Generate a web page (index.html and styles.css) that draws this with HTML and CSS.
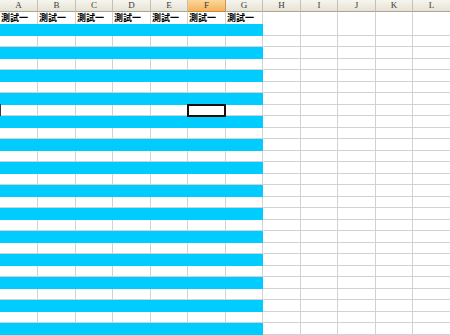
FILE: index.html
```html
<!DOCTYPE html>
<html>
<head>
<meta charset="utf-8">
<link rel="stylesheet" href="styles.css">
</head>
<body>
<div class="sheet">
  <div class="row hdr">
    <div class="hc">A</div><div class="hc">B</div><div class="hc">C</div><div class="hc">D</div><div class="hc">E</div><div class="hc sel">F</div><div class="hc">G</div><div class="hc">H</div><div class="hc">I</div><div class="hc">J</div><div class="hc">K</div><div class="hc">L</div>
  </div>
  <div class="row first">
    <div class="cell t">測試一</div><div class="cell t">測試一</div><div class="cell t">測試一</div><div class="cell t">測試一</div><div class="cell t">測試一</div><div class="cell t">測試一</div><div class="cell t">測試一</div><div class="cell"></div><div class="cell"></div><div class="cell"></div><div class="cell"></div><div class="cell"></div>
  </div>
  <div class="row c"><div class="fill"></div><div class="cell"></div><div class="cell"></div><div class="cell"></div><div class="cell"></div><div class="cell"></div></div>
  <div class="row w"><div class="cell"></div><div class="cell"></div><div class="cell"></div><div class="cell"></div><div class="cell"></div><div class="cell"></div><div class="cell"></div><div class="cell"></div><div class="cell"></div><div class="cell"></div><div class="cell"></div><div class="cell"></div></div>
  <div class="row c"><div class="fill"></div><div class="cell"></div><div class="cell"></div><div class="cell"></div><div class="cell"></div><div class="cell"></div></div>
  <div class="row w"><div class="cell"></div><div class="cell"></div><div class="cell"></div><div class="cell"></div><div class="cell"></div><div class="cell"></div><div class="cell"></div><div class="cell"></div><div class="cell"></div><div class="cell"></div><div class="cell"></div><div class="cell"></div></div>
  <div class="row c"><div class="fill"></div><div class="cell"></div><div class="cell"></div><div class="cell"></div><div class="cell"></div><div class="cell"></div></div>
  <div class="row w"><div class="cell"></div><div class="cell"></div><div class="cell"></div><div class="cell"></div><div class="cell"></div><div class="cell"></div><div class="cell"></div><div class="cell"></div><div class="cell"></div><div class="cell"></div><div class="cell"></div><div class="cell"></div></div>
  <div class="row c"><div class="fill"></div><div class="cell"></div><div class="cell"></div><div class="cell"></div><div class="cell"></div><div class="cell"></div></div>
  <div class="row w"><div class="cell active-row"><span class="rowmark"></span></div><div class="cell"></div><div class="cell"></div><div class="cell"></div><div class="cell"></div><div class="cell active"><span class="cursor"></span></div><div class="cell"></div><div class="cell"></div><div class="cell"></div><div class="cell"></div><div class="cell"></div><div class="cell"></div></div>
  <div class="row c"><div class="fill"></div><div class="cell"></div><div class="cell"></div><div class="cell"></div><div class="cell"></div><div class="cell"></div></div>
  <div class="row w"><div class="cell"></div><div class="cell"></div><div class="cell"></div><div class="cell"></div><div class="cell"></div><div class="cell"></div><div class="cell"></div><div class="cell"></div><div class="cell"></div><div class="cell"></div><div class="cell"></div><div class="cell"></div></div>
  <div class="row c"><div class="fill"></div><div class="cell"></div><div class="cell"></div><div class="cell"></div><div class="cell"></div><div class="cell"></div></div>
  <div class="row w"><div class="cell"></div><div class="cell"></div><div class="cell"></div><div class="cell"></div><div class="cell"></div><div class="cell"></div><div class="cell"></div><div class="cell"></div><div class="cell"></div><div class="cell"></div><div class="cell"></div><div class="cell"></div></div>
  <div class="row c"><div class="fill"></div><div class="cell"></div><div class="cell"></div><div class="cell"></div><div class="cell"></div><div class="cell"></div></div>
  <div class="row w"><div class="cell"></div><div class="cell"></div><div class="cell"></div><div class="cell"></div><div class="cell"></div><div class="cell"></div><div class="cell"></div><div class="cell"></div><div class="cell"></div><div class="cell"></div><div class="cell"></div><div class="cell"></div></div>
  <div class="row c"><div class="fill"></div><div class="cell"></div><div class="cell"></div><div class="cell"></div><div class="cell"></div><div class="cell"></div></div>
  <div class="row w"><div class="cell"></div><div class="cell"></div><div class="cell"></div><div class="cell"></div><div class="cell"></div><div class="cell"></div><div class="cell"></div><div class="cell"></div><div class="cell"></div><div class="cell"></div><div class="cell"></div><div class="cell"></div></div>
  <div class="row c"><div class="fill"></div><div class="cell"></div><div class="cell"></div><div class="cell"></div><div class="cell"></div><div class="cell"></div></div>
  <div class="row w"><div class="cell"></div><div class="cell"></div><div class="cell"></div><div class="cell"></div><div class="cell"></div><div class="cell"></div><div class="cell"></div><div class="cell"></div><div class="cell"></div><div class="cell"></div><div class="cell"></div><div class="cell"></div></div>
  <div class="row c"><div class="fill"></div><div class="cell"></div><div class="cell"></div><div class="cell"></div><div class="cell"></div><div class="cell"></div></div>
  <div class="row w"><div class="cell"></div><div class="cell"></div><div class="cell"></div><div class="cell"></div><div class="cell"></div><div class="cell"></div><div class="cell"></div><div class="cell"></div><div class="cell"></div><div class="cell"></div><div class="cell"></div><div class="cell"></div></div>
  <div class="row c"><div class="fill"></div><div class="cell"></div><div class="cell"></div><div class="cell"></div><div class="cell"></div><div class="cell"></div></div>
  <div class="row w"><div class="cell"></div><div class="cell"></div><div class="cell"></div><div class="cell"></div><div class="cell"></div><div class="cell"></div><div class="cell"></div><div class="cell"></div><div class="cell"></div><div class="cell"></div><div class="cell"></div><div class="cell"></div></div>
  <div class="row c"><div class="fill"></div><div class="cell"></div><div class="cell"></div><div class="cell"></div><div class="cell"></div><div class="cell"></div></div>
  <div class="row w"><div class="cell"></div><div class="cell"></div><div class="cell"></div><div class="cell"></div><div class="cell"></div><div class="cell"></div><div class="cell"></div><div class="cell"></div><div class="cell"></div><div class="cell"></div><div class="cell"></div><div class="cell"></div></div>
  <div class="row c"><div class="fill"></div><div class="cell"></div><div class="cell"></div><div class="cell"></div><div class="cell"></div><div class="cell"></div></div>
  <div class="row w"><div class="cell"></div><div class="cell"></div><div class="cell"></div><div class="cell"></div><div class="cell"></div><div class="cell"></div><div class="cell"></div><div class="cell"></div><div class="cell"></div><div class="cell"></div><div class="cell"></div><div class="cell"></div></div>
  <div class="row c"><div class="fill"></div><div class="cell"></div><div class="cell"></div><div class="cell"></div><div class="cell"></div><div class="cell"></div></div>
  <div class="row w"><div class="cell"></div><div class="cell"></div><div class="cell"></div><div class="cell"></div><div class="cell"></div><div class="cell"></div><div class="cell"></div><div class="cell"></div><div class="cell"></div><div class="cell"></div><div class="cell"></div><div class="cell"></div></div>
</div>
</body>
</html>
```
FILE: styles.css
```css
html, body {
  margin: 0;
  padding: 0;
  background: #ffffff;
  overflow: hidden;
}
.sheet {
  width: 451px;
  display: flex;
  flex-direction: column;
}
.row {
  display: grid;
  grid-template-columns: 38px 38px 37px 38px 37px 38px 37px 38px 37px 38px 37px 38px;
}
.hdr { height: 12px; }
.first { height: 12px; }
.c { height: 12px; }
.w { height: 11px; }
.hc {
  box-sizing: border-box;
  height: 12px;
  border-right: 1px solid #c4c1b0;
  border-bottom: 1px solid #a9a698;
  background: linear-gradient(#f6f5ef, #e6e3d4);
  font-family: "Liberation Serif", "DejaVu Serif", serif;
  font-size: 9px;
  line-height: 11px;
  color: #3a3a3a;
  text-align: center;
}
.hc.sel {
  background: linear-gradient(#fbd79b, #f5b35a);
  border-right-color: #c8965a;
  border-bottom-color: #c68b3c;
}
.cell {
  box-sizing: border-box;
  border-right: 1px solid #d2d2d2;
  border-bottom: 1px solid #d2d2d2;
  background: #ffffff;
  min-width: 0;
}
.cell.t {
  font-family: "Noto Sans CJK TC", "Noto Sans CJK SC", sans-serif;
  font-size: 9px;
  font-weight: 700;
  line-height: 12px;
  color: #000000;
  white-space: nowrap;
  overflow: visible;
  padding-left: 1px;
}
.fill {
  grid-column: 1 / 8;
  background: #00ccff;
}
.active, .active-row { position: relative; }
.cursor {
  position: absolute;
  left: -1px;
  top: -1px;
  width: 39px;
  height: 13px;
  box-sizing: border-box;
  border: 2px solid #1e0c0c;
}
.rowmark {
  position: absolute;
  left: 0;
  top: -1px;
  width: 1px;
  height: 12px;
  background: #3a3a3a;
}
```
